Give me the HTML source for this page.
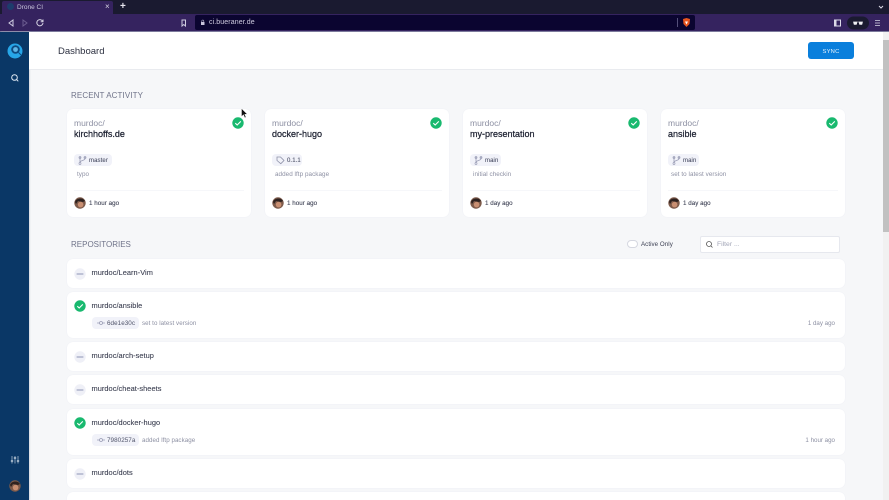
<!DOCTYPE html>
<html><head><meta charset="utf-8"><style>
*{box-sizing:border-box}
html,body{margin:0;padding:0;width:889px;height:500px;overflow:hidden;background:#f6f7f9;font-family:"Liberation Sans",sans-serif}
#w{position:absolute;left:0;top:0;width:889px;height:500px;overflow:hidden;background:#f6f7f9}
.a{position:absolute;white-space:nowrap}
.card{position:absolute;top:109px;width:184px;height:108px;background:#fff;border-radius:6px;box-shadow:0 0 1px #e4e6ee}
.card .o{position:absolute;left:7px;top:9px;font-size:8.5px;color:#8d90a3;line-height:10px}
.card .n{position:absolute;left:7px;top:20px;font-size:9px;color:#1c2030;line-height:11px;-webkit-text-stroke:.25px #1c2030}
.card .chip{position:absolute;left:7px;top:45px;height:12px;background:#f1f2f9;border-radius:4px;font-size:6px;line-height:14px;color:#50546a;padding-left:15px;letter-spacing:.1px;-webkit-text-stroke:.1px #50546a}
.card .m{position:absolute;left:10px;top:61px;font-size:6.3px;line-height:9px;color:#8d90a3;letter-spacing:.05px}
.card .l{position:absolute;left:7px;right:7px;top:81px;height:1px;background:#f6f7fa}
.card .av{position:absolute;left:7px;top:88px}
.card .t{position:absolute;left:22px;top:91px;font-size:6.2px;line-height:8px;color:#3d4154;letter-spacing:.05px;-webkit-text-stroke:.1px #3d4154}
.card .ok{position:absolute;left:165px;top:8px}
.card .ci{position:absolute;left:11px;top:47px}
.row{position:absolute;left:67px;width:778px;background:#fff;border-radius:6px;box-shadow:0 0 1px #e4e6ee}
.row .n{position:absolute;left:24.5px;top:9px;font-size:7.4px;line-height:10px;color:#3a3e50;letter-spacing:.05px;-webkit-text-stroke:.1px #3a3e50}
.row .st{position:absolute;left:7px;top:8px}
.row .sha{position:absolute;left:25px;top:25px;height:12px;width:47px;border-radius:4px;background:#f1f2f9;font-size:6.3px;line-height:14px;color:#50546a;padding-left:15px;letter-spacing:.05px}
.row .msg{position:absolute;left:75px;top:28px;font-size:6.2px;line-height:8px;color:#8d90a3;letter-spacing:.05px}
.row .tm{position:absolute;right:10px;top:28px;font-size:6.2px;line-height:8px;color:#8d90a3}
.h{font-size:8px;color:#6f7389;line-height:10px}
</style></head><body><div id="w">
<svg width="0" height="0" style="position:absolute"><defs>
<g id="ok"><circle cx="6" cy="6" r="5.7" fill="#19b96f"/><path d="M3.3 6.200l1.900 1.800 3.600-3.600" fill="none" stroke="#fff" stroke-width="1.100"/></g>
<g id="no"><circle cx="6" cy="6" r="5.700" fill="#eff0f7"/><path d="M2.600 6h6.800" stroke="#8e95b5" stroke-width="1"/></g>
<g id="av"><circle cx="6" cy="6" r="5.700" fill="#7d5a4a"/><path d="M1 5C2 1 9 0 11 4L9 5 4 4 2 7z" fill="#2e2220"/><circle cx="6.600" cy="7.600" r="2.800" fill="#c98f72"/></g>
<g id="br"><path d="M2 1v6M7 1v1.500C7 5 2 4 2 6.500" fill="none" stroke="#9a9db5" stroke-width=".8"/><circle cx="2" cy="7.500" r="1" fill="none" stroke="#9a9db5" stroke-width=".7"/><circle cx="2" cy="1.500" r="1" fill="none" stroke="#9a9db5" stroke-width=".7"/><circle cx="7" cy="1.500" r="1" fill="none" stroke="#9a9db5" stroke-width=".7"/></g>
<g id="cm"><path d="M0 4h2.500M5.500 4H8" stroke="#9a9db5" stroke-width=".8"/><circle cx="4" cy="4" r="1.500" fill="none" stroke="#9a9db5" stroke-width=".8"/></g>
</defs></svg>

<!-- browser chrome -->
<div class="a" style="left:0;top:0;width:889px;height:14px;background:#1a1a30"></div>
<div class="a" style="left:2px;top:1px;width:111px;height:13px;background:#35235f;border-radius:2px 2px 0 0"></div>
<div class="a" style="left:0;top:14px;width:889px;height:18px;background:#35235f;border-bottom:1px solid #7c7a9c"></div>
<div class="a" style="left:7px;top:3px;width:7px;height:7px;border-radius:50%;background:#1d3d6c"></div>
<div class="a" style="left:17px;top:3px;font-size:6.500px;line-height:9px;color:#c9c5dc">Drone CI</div>
<div class="a" style="left:105px;top:2px;font-size:8px;line-height:10px;color:#d5d2e2">×</div>
<div class="a" style="left:120px;top:1px;font-size:10px;line-height:12px;color:#e8e6f0;font-weight:bold">+</div>
<svg class="a" style="left:0;top:0" width="889" height="32">
<path d="M13 20l-4 3 4 3z" fill="none" stroke="#cfcce0" stroke-width="1"/>
<path d="M23 20l4 3-4 3z" fill="none" stroke="#6c5d90" stroke-width="1"/>
<path d="M42.500 21a3.100 3.100 0 1 0 .5 2M43 19.500v2.300h-2.300" fill="none" stroke="#d5d2e2" stroke-width="1"/>
<path d="M182 20h3.500v6l-1.750-1.500L182 26z" fill="none" stroke="#cfcce0" stroke-width="1"/>
<rect x="195" y="15" width="500" height="15" rx="2" fill="#0b0530"/>
<rect x="201" y="22" width="3.500" height="3" fill="#c9c5dc"/><path d="M201.800 22v-1a1 1 0 0 1 2 0v1" stroke="#c9c5dc" fill="none" stroke-width=".6"/>
<rect x="677" y="18" width="1" height="9" fill="#55507a"/>
<path d="M683 19l3.500-1 3.500 1-.5 5-3 3-3-3z" fill="#e8561f"/><path d="M685 21.500h3l-1.500 3z" fill="#fff"/>
<rect x="834.500" y="20" width="6" height="6" fill="#35235f" stroke="#dcd9e8" stroke-width="1"/><rect x="834" y="20" width="2.500" height="6" fill="#dcd9e8"/>
<rect x="847" y="16.500" width="22" height="13" rx="6.500" fill="#1a1a30"/>
<path d="M853 22h10M853.500 22h3.500l-.5 2.500h-2.500zM859 22h3.500l-.5 2.500h-2.500z" fill="#f0f0f4" stroke="#f0f0f4" stroke-width=".5"/>
<path d="M875 20.500h5M875 23h5M875 25.500h5" stroke="#aeaac4" stroke-width="1"/>
<path d="M877 6l2 2 2-2" transform="translate(2 0)" fill="none" stroke="#dcdae6" stroke-width="1"/>
</svg>
<div class="a" style="left:209px;top:18px;font-size:7px;line-height:10px;color:#cfcce0;letter-spacing:.1px">ci.bueraner.de</div>

<!-- sidebar -->
<div class="a" style="left:0;top:32px;width:29px;height:468px;background:#0a3766;box-shadow:1px 0 1px #d9dbe3"></div>
<svg class="a" style="left:0;top:32px" width="29" height="468">
<circle cx="15" cy="19" r="7.500" fill="#27a6e8"/><circle cx="15.500" cy="17.500" r="4.300" fill="#0e4a80"/><circle cx="15.500" cy="17.500" r="2.400" fill="#5fb6e6"/><path d="M18.500 20.500l2.500 2.500" stroke="#0e4a80" stroke-width="1"/>
<circle cx="14.500" cy="45.500" r="2.800" fill="none" stroke="#dfe8f2" stroke-width="1"/><path d="M16.500 47.500l1.800 1.800" stroke="#dfe8f2" stroke-width="1"/>
<path d="M12 424v7.500M15 424v7.500M18 424v7.500" stroke="#b9c9da" stroke-width=".7" fill="none"/>
<path d="M10.800 429h2.400M13.800 426h2.400M16.800 429h2.400" stroke="#eef3f8" stroke-width="1" fill="none"/>
<g transform="translate(9,448)"><use href="#av"/></g>
</svg>

<!-- header -->
<div class="a" style="left:29px;top:32px;width:854px;height:38px;background:#fff;border-bottom:1px solid #e9ebef"></div>
<div class="a" style="left:58px;top:45px;font-size:9.500px;line-height:13px;color:#2c3040">Dashboard</div>
<div class="a" style="left:808px;top:42px;width:46px;height:17px;background:#0a7fdc;border-radius:3px;color:#e8f3fc;font-size:5.800px;line-height:20px;text-align:center;letter-spacing:.2px">SYNC</div>

<!-- scrollbar -->
<div class="a" style="left:883px;top:32px;width:6px;height:468px;background:#f1f1f1"></div>
<div class="a" style="left:883px;top:40px;width:6px;height:192px;background:#c1c1c1"></div>

<div class="a h" style="left:71px;top:91px;letter-spacing:.1px">RECENT ACTIVITY</div>

<div class="card" style="left:67px"><div class="o">murdoc/</div><div class="n">kirchhoffs.de</div><svg class="ok" width="12" height="12"><use href="#ok"/></svg><div class="chip" style="width:38px">master</div><svg class="ci" width="9" height="9"><use href="#br"/></svg><div class="m">typo</div><div class="l"></div><svg class="av" width="12" height="12"><use href="#av"/></svg><div class="t">1 hour ago</div></div>
<div class="card" style="left:265px"><div class="o">murdoc/</div><div class="n">docker-hugo</div><svg class="ok" width="12" height="12"><use href="#ok"/></svg><div class="chip" style="width:30px">0.1.1</div><svg class="ci" width="9" height="9"><path d="M1 1h3.500l3.500 3.500-3.200 3.200L1 4.500z" fill="none" stroke="#8e91a8" stroke-width=".8"/></svg><div class="m">added lftp package</div><div class="l"></div><svg class="av" width="12" height="12"><use href="#av"/></svg><div class="t">1 hour ago</div></div>
<div class="card" style="left:463px"><div class="o">murdoc/</div><div class="n">my-presentation</div><svg class="ok" width="12" height="12"><use href="#ok"/></svg><div class="chip" style="width:31px">main</div><svg class="ci" width="9" height="9"><use href="#br"/></svg><div class="m">initial checkin</div><div class="l"></div><svg class="av" width="12" height="12"><use href="#av"/></svg><div class="t">1 day ago</div></div>
<div class="card" style="left:661px"><div class="o">murdoc/</div><div class="n">ansible</div><svg class="ok" width="12" height="12"><use href="#ok"/></svg><div class="chip" style="width:31px">main</div><svg class="ci" width="9" height="9"><use href="#br"/></svg><div class="m">set to latest version</div><div class="l"></div><svg class="av" width="12" height="12"><use href="#av"/></svg><div class="t">1 day ago</div></div>

<div class="a h" style="left:71px;top:240px">REPOSITORIES</div>
<div class="a" style="left:627px;top:240px;width:11px;height:8px;border-radius:4px;background:#fff;border:1px solid #d5d7e0"></div>
<div class="a" style="left:641px;top:241px;font-size:6.200px;line-height:8px;color:#3d4154;letter-spacing:.05px">Active Only</div>
<div class="a" style="left:700px;top:236px;width:140px;height:17px;background:#fff;border:1px solid #e6e8ee;border-radius:2px"></div>
<svg class="a" style="left:705px;top:240px" width="9" height="9"><circle cx="4" cy="4" r="2.500" fill="none" stroke="#555" stroke-width=".8"/><path d="M6 6l1.500 1.500" stroke="#555" stroke-width=".8"/></svg>
<div class="a" style="left:717px;top:241px;font-size:6.800px;line-height:8px;color:#a3a6b8">Filter ...</div>

<div class="row" style="top:259px;height:29px"><svg class="st" width="12" height="12" style="top:9px"><use href="#no"/></svg><div class="n">murdoc/Learn-Vim</div></div>
<div class="row" style="top:292px;height:46px"><svg class="st" width="12" height="12"><use href="#ok"/></svg><div class="n">murdoc/ansible</div><div class="sha">6de1e30c</div><svg class="a" style="left:30px;top:27px" width="8" height="8"><use href="#cm"/></svg><div class="msg">set to latest version</div><div class="tm">1 day ago</div></div>
<div class="row" style="top:342px;height:29px"><svg class="st" width="12" height="12" style="top:9px"><use href="#no"/></svg><div class="n">murdoc/arch-setup</div></div>
<div class="row" style="top:375px;height:29px"><svg class="st" width="12" height="12" style="top:9px"><use href="#no"/></svg><div class="n">murdoc/cheat-sheets</div></div>
<div class="row" style="top:409px;height:46px"><svg class="st" width="12" height="12"><use href="#ok"/></svg><div class="n">murdoc/docker-hugo</div><div class="sha">7980257a</div><svg class="a" style="left:30px;top:27px" width="8" height="8"><use href="#cm"/></svg><div class="msg">added lftp package</div><div class="tm">1 hour ago</div></div>
<div class="row" style="top:459px;height:29px"><svg class="st" width="12" height="12" style="top:9px"><use href="#no"/></svg><div class="n">murdoc/dots</div></div>
<div class="row" style="top:492px;height:29px"></div>

<svg class="a" style="left:241px;top:108px" width="7" height="11"><path d="M.5.500v8l2-1.800 1.300 3 1.200-.5-1.300-2.900h2.600z" fill="#111" stroke="#fff" stroke-width=".4"/></svg>
</div></body></html>
